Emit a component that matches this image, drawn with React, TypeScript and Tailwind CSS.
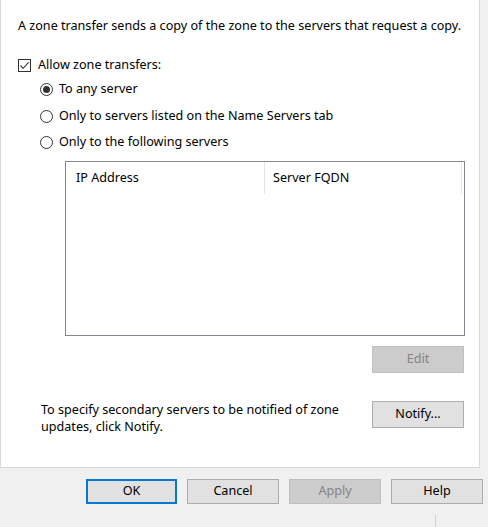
import React from "react";

const font = { fontFamily: '"Noto Sans", "Liberation Sans", sans-serif' };

function Radio({ checked, label }: { checked?: boolean; label: string }) {
  return (
    <div className="flex items-center h-[16px]">
      <span className="w-[13px] h-[13px] rounded-full border border-[#333333] bg-white flex items-center justify-center">
        {checked && <span className="w-[7px] h-[7px] rounded-full bg-[#333333]" />}
      </span>
      <span className="ml-[6px]">{label}</span>
    </div>
  );
}

function Btn({
  label,
  disabled,
  primary,
  className,
}: {
  label: string;
  disabled?: boolean;
  primary?: boolean;
  className?: string;
}) {
  let cls = "bg-[#e1e1e1] border border-[#adadad] text-black";
  if (disabled) cls = "bg-[#cccccc] border border-[#bfbfbf] text-[#838383]";
  if (primary) cls = "bg-[#e1e1e1] border-2 border-[#0078d7] text-black";
  return (
    <div className={`flex items-center justify-center ${cls} ${className ?? ""}`}>
      {label}
    </div>
  );
}

export default function App() {
  return (
    <div
      className="relative w-[488px] h-[527px] bg-[#f0f0f0] overflow-hidden text-[12.6px] text-black"
      style={font}
    >
      {/* onglet blanc */}
      <div className="w-[480px] h-[468px] bg-white border-x border-b border-[#d9d9d9] flex flex-col">
        <p className="mt-[18px] ml-[17px] leading-[16px] whitespace-nowrap">
          A zone transfer sends a copy of the zone to the servers that request a copy.
        </p>

        <div className="mt-[23px] ml-[17px] flex items-center h-[16px]">
          <span className="w-[13px] h-[13px] border border-[#333333] flex items-center justify-center">
            <svg width="11" height="11" viewBox="0 0 11 11">
              <path d="M1.5 5.5 L4.2 8.3 L9.6 2.4" fill="none" stroke="#333" strokeWidth="1.1" />
            </svg>
          </span>
          <span className="ml-[7px]">Allow zone transfers:</span>
        </div>

        <div className="ml-[39px] flex flex-col">
          <div className="mt-[8px]">
            <Radio checked label="To any server" />
          </div>
          <div className="mt-[11px]">
            <Radio label="Only to servers listed on the Name Servers tab" />
          </div>
          <div className="mt-[10px]">
            <Radio label="Only to the following servers" />
          </div>
        </div>

        {/* liste des serveurs */}
        <div className="mt-[11px] ml-[64px] w-[400px] h-[175px] border border-[#828790] bg-white">
          <div className="flex h-[32px]">
            <div className="w-[199px] h-full pl-[10px] pt-[8px] leading-[16px] border-r border-[#e5e5e5]">
              IP Address
            </div>
            <div className="w-[197px] h-full pl-[8px] pt-[8px] leading-[16px] border-r border-[#e5e5e5]">
              Server FQDN
            </div>
          </div>
        </div>

        <Btn label="Edit" disabled className="mt-[10px] ml-[371px] w-[92px] h-[27px]" />

        <div className="mt-[28px] flex">
          <p className="ml-[40px] w-[320px] leading-[17px]">
            To specify secondary servers to be notified of zone
            <br />
            updates, click Notify.
          </p>
          <Btn label="Notify..." className="ml-[11px] w-[92px] h-[27px]" />
        </div>
      </div>

      {/* boutons du bas */}
      <div className="mt-[11px] ml-[86px] flex gap-[10px]">
        <Btn label="OK" primary className="w-[91px] h-[25px]" />
        <Btn label="Cancel" className="w-[92px] h-[25px]" />
        <Btn label="Apply" disabled className="w-[92px] h-[25px]" />
        <Btn label="Help" className="w-[92px] h-[25px]" />
      </div>

      <div className="absolute left-[435px] top-[515px] w-px h-[12px] bg-[#d0d0d0]" />
    </div>
  );
}
